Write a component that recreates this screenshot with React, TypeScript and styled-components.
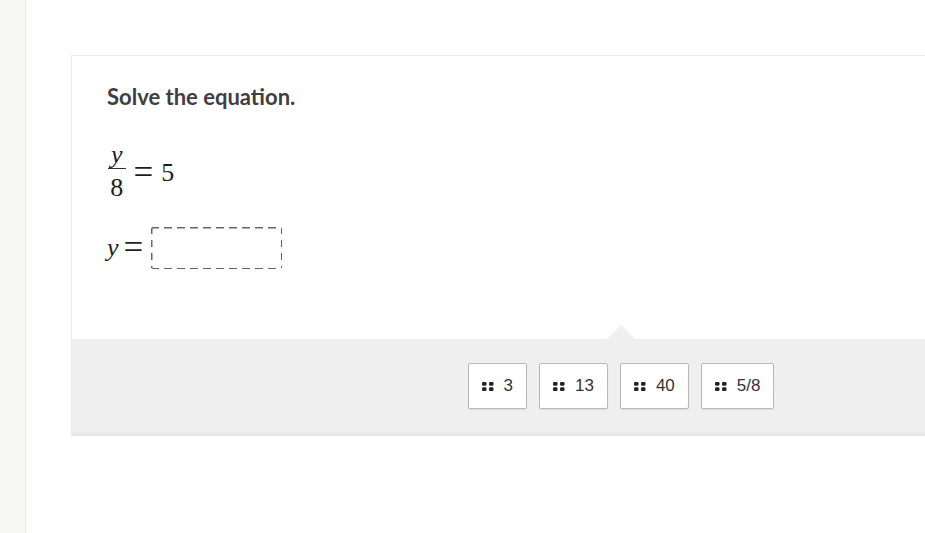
import styled, { createGlobalStyle } from "styled-components";

const GlobalStyle = createGlobalStyle`
    html, body {
        margin: 0;
        padding: 0;
        height: 100%;
        overflow: hidden;
        background: #fff;
    }
`;

const mathFont = `"Liberation Serif", "Times New Roman", "DejaVu Serif", serif`;

const choices = ["3", "13", "40", "5/8"];

const DragDots = () => (
    <svg width="12" height="9" viewBox="0 0 12 9" aria-hidden="true">
        <rect x="0" y="0" width="4.5" height="3.8" rx="1.3" fill="#222" />
        <rect x="7" y="0" width="4.5" height="3.8" rx="1.3" fill="#222" />
        <rect x="0" y="5.2" width="4.5" height="3.8" rx="1.3" fill="#222" />
        <rect x="7" y="5.2" width="4.5" height="3.8" rx="1.3" fill="#222" />
    </svg>
);

export default function App() {
    return (
        <>
            <GlobalStyle />
            <Page>
                <Sidebar />
                <Main>
                    <Card>
                        <Question>
                            <Title>Solve the equation.</Title>

                            <MathRow>
                                <Fraction>
                                    <Numer>y</Numer>
                                    <Denom>8</Denom>
                                </Fraction>
                                <Op>=</Op>
                                <Num>5</Num>
                            </MathRow>

                            <AnswerRow>
                                <Var>y</Var>
                                <Op $tight>=</Op>
                                <DropBox />
                            </AnswerRow>
                        </Question>

                        <Tray>
                            <Pointer />
                            {choices.map((c) => (
                                <Choice key={c} type="button">
                                    <DragDots />
                                    <span>{c}</span>
                                </Choice>
                            ))}
                        </Tray>
                    </Card>
                </Main>
            </Page>
        </>
    );
}

const Page = styled.div`
    display: flex;
    height: 533px;
    width: 925px;
    overflow: hidden;
`;

const Sidebar = styled.aside`
    flex: 0 0 25px;
    background: #f7f7f5;
    border-right: 1px solid #ebebea;
`;

const Main = styled.main`
    flex: 1;
    min-width: 0;
    padding: 55px 0 0 45px;
`;

const Card = styled.section`
    width: 1098px;
    border: 1px solid #ececec;
    border-bottom: 3px solid #e6e6e6;
    background: #fff;
`;

const Question = styled.div`
    padding: 28px 35px 0;
    height: 283px;
    box-sizing: border-box;
`;

const Title = styled.h2`
    margin: 0;
    font-family: Lato, "Noto Sans", sans-serif;
    font-weight: 700;
    font-size: 22px;
    line-height: 26px;
    color: #3d3f42;
`;

const MathRow = styled.div`
    display: flex;
    align-items: center;
    margin-top: 34px;
    font-family: ${mathFont};
    font-size: 26px;
    color: #1d1d1d;
`;

const Fraction = styled.span`
    display: inline-flex;
    flex-direction: column;
    align-items: center;
    padding: 0 1px;
`;

const Numer = styled.span`
    font-family: ${mathFont};
    font-style: italic;
    line-height: 22px;
    padding: 0 3px 2px;
    border-bottom: 1.5px solid #333;
`;

const Denom = styled.span`
    font-family: ${mathFont};
    line-height: 26px;
    padding-top: 6px;
`;

const Op = styled.span<{ $tight?: boolean }>`
    font-family: ${mathFont};
    font-size: 35px;
    line-height: 32px;
    margin: ${(p) => (p.$tight ? "0 8px 0 5px" : "0 8px 0 7px")};
    color: #1d1d1d;
`;

const Num = styled.span`
    font-family: ${mathFont};
    line-height: 26px;
`;

const AnswerRow = styled.div`
    display: flex;
    align-items: center;
    margin-top: 26px;
`;

const Var = styled.span`
    font-family: ${mathFont};
    font-style: italic;
    font-size: 26px;
    color: #1d1d1d;
`;

const DropBox = styled.div`
    width: 131px;
    height: 42px;
    border-radius: 2px;
    background:
        repeating-linear-gradient(90deg, #666 0 8px, transparent 8px 13px) top left / 100% 1.5px no-repeat,
        repeating-linear-gradient(90deg, #666 0 8px, transparent 8px 13px) bottom left / 100% 1.5px no-repeat,
        repeating-linear-gradient(180deg, #666 0 7px, transparent 7px 13px) top left / 1.5px 100% no-repeat,
        repeating-linear-gradient(180deg, #666 0 7px, transparent 7px 13px) top right / 1.5px 100% no-repeat;
`;

const Tray = styled.div`
    position: relative;
    display: flex;
    justify-content: center;
    gap: 12px;
    padding: 24px 0 24px;
    background: #efefef;
`;

const Pointer = styled.span`
    position: absolute;
    top: -14px;
    left: 50%;
    margin-left: -14px;
    width: 0;
    height: 0;
    border-left: 14px solid transparent;
    border-right: 14px solid transparent;
    border-bottom: 14px solid #efefef;
`;

const Choice = styled.button`
    display: flex;
    align-items: center;
    gap: 10px;
    height: 46px;
    padding: 0 13px 0 13px;
    background: #fff;
    border: 1px solid #b9b9b9;
    border-radius: 2px;
    box-shadow: 0 1px 1px rgba(0, 0, 0, 0.08);
    font-family: "Liberation Sans", Arial, sans-serif;
    font-size: 17px;
    color: #333;
    cursor: grab;
`;
